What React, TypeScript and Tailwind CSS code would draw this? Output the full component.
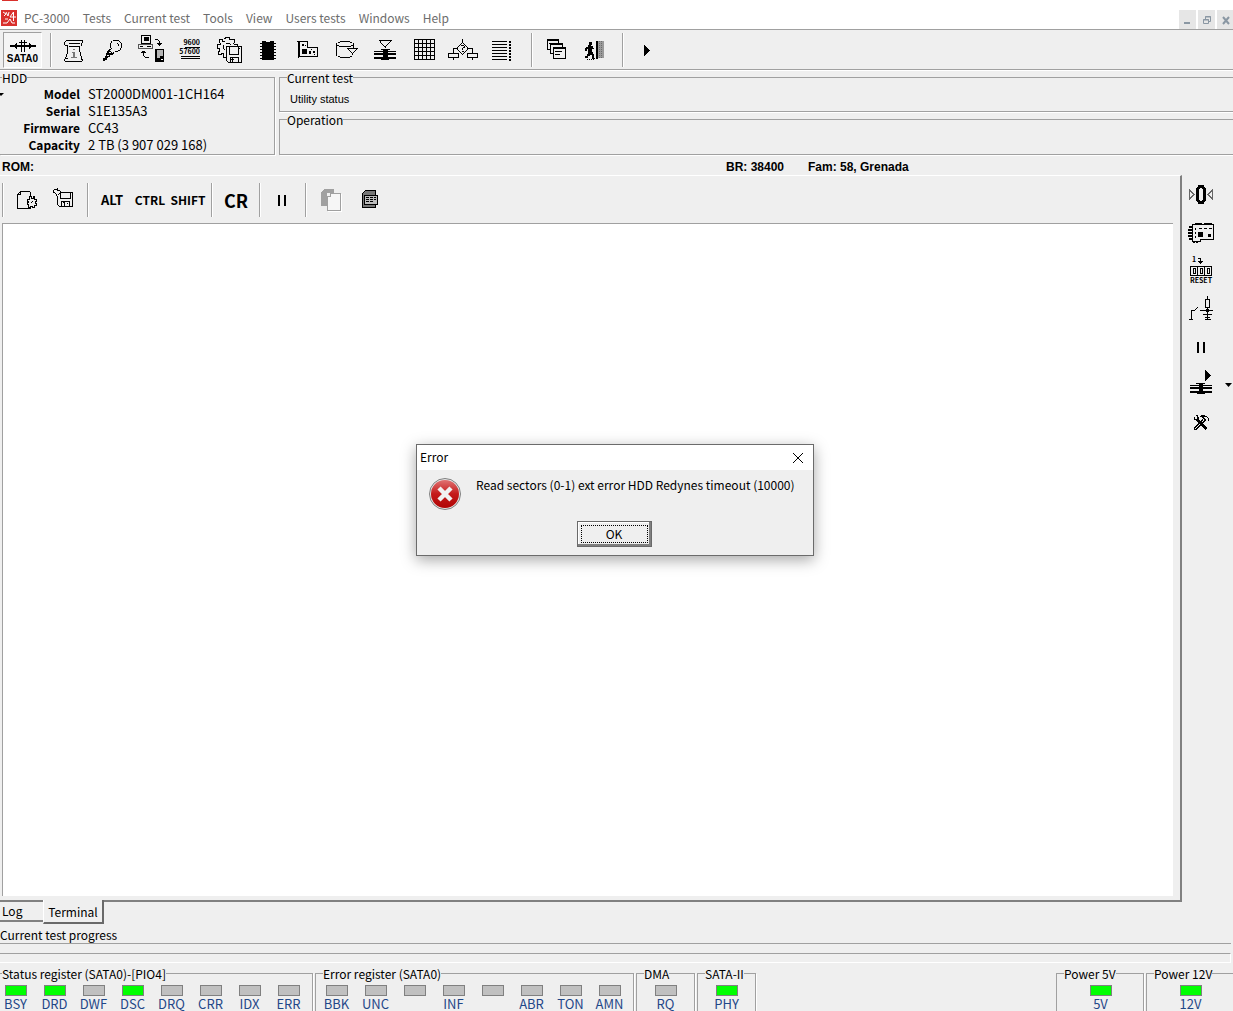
import type { ReactNode } from "react";

const menuItems = [
  "PC-3000",
  "Tests",
  "Current test",
  "Tools",
  "View",
  "Users tests",
  "Windows",
  "Help",
];

const driveInfo = [
  { label: "Model", value: "ST2000DM001-1CH164" },
  { label: "Serial", value: "S1E135A3" },
  { label: "Firmware", value: "CC43" },
  { label: "Capacity", value: "2 TB (3 907 029 168)" },
];

interface Led {
  label: string;
  on?: boolean;
}

const statusLeds: Led[] = [
  { label: "BSY", on: true },
  { label: "DRD", on: true },
  { label: "DWF" },
  { label: "DSC", on: true },
  { label: "DRQ" },
  { label: "CRR" },
  { label: "IDX" },
  { label: "ERR" },
];

const errorLeds: Led[] = [
  { label: "BBK" },
  { label: "UNC" },
  { label: "" },
  { label: "INF" },
  { label: "" },
  { label: "ABR" },
  { label: "TON" },
  { label: "AMN" },
];

function Icon({ children }: { children: ReactNode }) {
  return (
    <svg
      width="32"
      height="32"
      viewBox="0 0 32 32"
      fill="none"
      stroke="#000"
      shapeRendering="crispEdges"
      className="shrink-0"
      aria-hidden="true"
    >
      {children}
    </svg>
  );
}

function SataIcon() {
  return (
    <svg
      width="26"
      height="12"
      viewBox="0 0 26 12"
      stroke="#000"
      fill="none"
      shapeRendering="crispEdges"
      aria-hidden="true"
    >
      <path d="M0 6H26" strokeWidth="2" />
      <path d="M5.5 4V8M6.5 3V9M19.5 3V9M20.5 4V8" />
      <path d="M11.5 0V12M14.5 0V12M9 2.5H17" />
    </svg>
  );
}

function ScriptIcon() {
  return (
    <Icon>
      <path d="M9 6.5H26M8.5 7V8M7.5 8V11M8 11.5H11M25.5 7V9M24.5 9V12M12 9.5H23M12 12.5H22M10.5 12V20M9.5 20V23M8.5 23V25M7.5 25V27M8 27.5H25M22.5 12V18M23.5 18V22M24.5 22V26M25.5 25V27M9 24.5H11" />
      <path d="M16 15.5H18M15 18.5H18M14 23.5H20" stroke="#777" />
      <path d="M17 18V23" strokeWidth="2" stroke="#777" />
    </Icon>
  );
}

function LampIcon() {
  return (
    <Icon>
      <path d="M17 6.5H23M15.5 7V9M14.5 9V14M23.5 7V8M24.5 8V9M25.5 9V14M24.5 14V16M22 16.5H24M19 17.5H22M17.5 18V20M15.5 14V15M13 15.5H15M21.5 9V10M22.5 10V12" />
      <path d="M12 16H14V17H15V18H16V19H17V21H14V23H12V24H11V26H9V27H7V24H9V22H10V19H11V17H12Z" fill="#000" stroke="none" />
      <path d="M13 18.5H15M11 21.5H13" stroke="#eee" />
    </Icon>
  );
}

function TransferIcon() {
  return (
    <Icon>
      <path d="M6.5 1.5H15.5V9.5H6.5Z" />
      <path d="M9 3H14V7H9Z" fill="#000" stroke="none" />
      <path d="M3.5 10.5H17.5V14.5H3.5Z" stroke="#555" />
      <path d="M5 12.5H8M12 12.5H16" />
      <path d="M20 5.5H23M23.5 6V7M24.5 7V12M22 9.5H27M23 10.5H26M8.5 17V22M9.5 22V23M10 23.5H14M6 18.5H11M7 17.5H10" />
      <path d="M20 15H29V28H20Z" fill="#000" stroke="none" />
      <path d="M22 16H28V22H25V24H22Z" fill="#b5b5b5" stroke="none" />
      <path d="M26 25H28V26H26Z" fill="#fff" stroke="none" />
    </Icon>
  );
}

function BaudIcon() {
  return (
    <Icon>
      <g
        fill="#000"
        stroke="none"
        fontFamily="Noto Sans CJK KR, sans-serif"
        fontWeight="700"
        fontSize="7"
        textAnchor="end"
      >
        <text x="26" y="11">9600</text>
        <text x="26" y="20">57600</text>
      </g>
      <path d="M11 13.5H26M7 22.5H26M7 24.5H26" />
    </Icon>
  );
}

function GearDiskIcon() {
  return (
    <Icon>
      <path d="M11 4.5H12M12.5 5V3.5H16.5V5.5H18M18.5 6V5.5H21.5V8.5M20.5 9V10M21 10.5H24.5V12M12 7.5H9.5V5.5H6.5V8.5M7.5 9V10.5H4.5V14.5H6.5V17.5M5.5 17V20.5H8.5V19.5H10.5V23.5H13M12.5 9.5H16.5M10.5 11V14.5M11.5 15V16M17.5 10V11" />
      <path d="M13.5 12.5H28.5V28.5H15.5L13.5 26.5Z" fill="#efefef" />
      <path d="M16.5 13V20.5H25.5V13M17.5 28V23.5H25.5V28M18 25.5H21M19.5 24V28M26.5 14V15" />
    </Icon>
  );
}

function ChipIcon() {
  return (
    <Icon>
      <path d="M10 7H14V8H18V7H22V26H10Z" fill="#000" stroke="none" />
      <path d="M8 9.5H24M8 12.5H24M8 15.5H24M8 18.5H24M8 21.5H24M8 24.5H24" />
    </Icon>
  );
}

function BoardIcon() {
  return (
    <Icon>
      <path d="M7.5 7V24M6 7.5H16.5V14M8.5 8V23M8 22.5H26.5V13.5H17M26 14V22" />
      <path d="M11 15H16V20H11ZM11 10H13V12H11ZM18 17H20V20H18ZM22 17H24V19H22Z" fill="#000" stroke="none" />
      <path d="M14 11.5H15M20 15.5H21M23 20.5H24" />
    </Icon>
  );
}

function CylinderIcon() {
  return (
    <Icon>
      <path d="M10 7.5H20M8 8.5H10M20 8.5H22M6.5 9V22M23.5 9V14M7 11.5H9M9 12.5H21M21 11.5H23M8 22.5H10M10 23.5H20M20 22.5H22" />
      <path d="M17 14.5H28M18.5 15V16M19.5 16V17M20.5 17V18M21.5 18V19M22.5 19V21M23.5 18V19M24.5 17V18M25.5 16V17M26.5 15V16" />
      <path d="M19 15H26L22.5 18.5Z" fill="#efefef" stroke="none" />
    </Icon>
  );
}

function HeadsIcon() {
  return (
    <Icon>
      <path d="M10 6.5H23M11.5 7V9M12.5 9V10M13.5 10V11M14.5 11V12M15.5 12V13M16.5 12V14M17.5 11V12M18.5 10V11M19.5 9V10M20.5 8V9M21.5 7V8" />
      <path d="M12 15.5H21M5 17.5H27M12 25.5H20" />
      <path d="M5 20H27M5 24H27" strokeWidth="2" />
      <path d="M14 16H19V25H14Z" fill="#000" stroke="none" />
    </Icon>
  );
}

function GridIcon() {
  return (
    <Icon>
      <path d="M6.5 5.5H26.5V25.5H6.5ZM10.5 5V26M14.5 5V26M18.5 5V26M22.5 5V26M6 9.5H27M6 13.5H27M6 17.5H27M6 21.5H27" />
    </Icon>
  );
}

function FlowIcon() {
  return (
    <Icon>
      <path d="M15.5 5V9M14.5 9V10M13.5 10V11M12.5 11V12M11.5 12V13M10.5 13V16M11.5 16V17M12.5 17V18M13.5 18V19M14.5 19V20M15.5 20V21M16.5 9V10M17.5 10V11M18.5 11V12M19.5 12V13M20.5 13V16M19.5 16V17M18.5 17V18M17.5 18V19M16.5 19V20" />
      <path d="M6 14.5H11M20 14.5H26M6.5 14V19M25.5 14V19M1.5 19.5H11.5V23.5H1.5ZM20.5 19.5H30.5V23.5H20.5ZM6.5 24V26M25.5 24V26" />
      <path d="M14 11.5H17M17.5 12V14M15.5 14V16M15 17.5H17M16 13.5H17" />
    </Icon>
  );
}

function ListIcon() {
  return (
    <Icon>
      <path d="M6 7.5H21M6 10.5H21M6 13.5H21M6 16.5H21M6 19.5H21M6 22.5H21M6 25.5H21" />
      <path d="M24 7V27" strokeWidth="2" strokeDasharray="2 1" />
    </Icon>
  );
}

function WindowsIcon() {
  return (
    <Icon>
      <path d="M6.5 5.5H17.5V15.5H6.5Z" fill="#efefef" />
      <path d="M6 6.5H18M8 9.5H9" />
      <path d="M9.5 9.5H21.5V19.5H9.5Z" fill="#efefef" />
      <path d="M9 10.5H22" />
      <path d="M12.5 13.5H24.5V24.5H12.5Z" fill="#efefef" />
      <path d="M12 14.5H25M14 17.5H21M14 20.5H19" />
    </Icon>
  );
}

function ExitIcon() {
  return (
    <Icon>
      <path d="M10 8H13V11H12V12H14V14H15V15H13V18H14V20H15V24H16V25H13V21H11V22H9V24H6V22H8V20H9V15H8V17H6V14H7V13H9V11H10Z" fill="#000" stroke="none" />
      <path d="M18 7V25" strokeWidth="2" />
      <path d="M19 7H25V24H19Z" fill="#9a9a9a" stroke="none" />
      <path d="M20.5 7V24M22.5 7V24" stroke="#6b6b6b" strokeDasharray="1 1" />
      <path d="M8 25.5H16" strokeDasharray="1 1" />
    </Icon>
  );
}

function PlayIcon() {
  return (
    <Icon>
      <path d="M14 11V22L20 16.5Z" fill="#000" stroke="none" />
    </Icon>
  );
}

function NewScriptIcon() {
  return (
    <Icon>
      <path d="M10.5 7.5H19.5M20.5 8V12M10.5 7V10.5H7.5V24.5H20.5V22M8.5 9V10M9.5 8V9" />
      <path d="M17.5 15.5H19.5V12.5H21.5V14.5H23.5V12.5H24.5V15.5H26.5V17.5H25.5V19.5H26.5V21.5H24.5V23.5H22.5V22.5H20.5V23.5H18.5V20.5H17.5V18.5H18.5V17.5H17.5Z" />
      <path d="M22 17.5H23M21 18.5H22" />
    </Icon>
  );
}

function SaveIcon() {
  return (
    <Icon>
      <path d="M5.5 5.5H9V7M9.5 4V6M10 6.5H12M12.5 7V9M11.5 9V10M10.5 10V11M5.5 6V9M6.5 8V9M7.5 9V10M8.5 10V12" />
      <path d="M13 8.5H24.5V22.5H11.5L9.5 20.5V12M12.5 9V14.5H22.5V9M13.5 22V17.5H21.5V22M15 18.5H17M16.5 18V22M19 19.5H20" />
    </Icon>
  );
}

function CopyIcon() {
  return (
    <Icon>
      <path d="M9 5H19V9H12V22H6V8H7V7H8V6H9Z" fill="#a0a0a0" stroke="none" />
      <path d="M15.5 9.5H25.5V26.5H12.5V12.5H15.5Z" fill="#f6f6f6" stroke="#a0a0a0" />
      <path d="M26.5 10V27.5H13" stroke="#fff" />
    </Icon>
  );
}

function NotesIcon() {
  return (
    <Icon>
      <path d="M11.5 6.5H21.5V23.5H8.5V9.5Z" fill="#777" />
      <path d="M10.5 11.5H23.5V20.5H10.5Z" fill="#bdbdbd" />
      <path d="M12 13.5H22M12 15.5H22M12 17.5H19" strokeDasharray="3 1" />
    </Icon>
  );
}

function PauseIcon() {
  return (
    <Icon>
      <path d="M13 11V22M19 11V22" strokeWidth="2" />
    </Icon>
  );
}

function ZeroIcon() {
  return (
    <Icon>
      <path d="M4.5 11V20L9 15.5ZM27.5 11V20L23 15.5Z" stroke="#666" />
      <path d="M14.5 7.5H17.5L19.5 10V21L17.5 23.5H14.5L12.5 21V10Z" strokeWidth="3" />
    </Icon>
  );
}

function ControllerIcon() {
  return (
    <Icon>
      <path d="M7.5 7.5H28.5V22.5H15.5V24.5H7.5Z" />
      <path d="M10 6H17V8H10ZM19 6H27V8H19ZM13 15H18V20H13ZM23 17H26V20H23Z" fill="#000" stroke="none" />
      <path d="M14 11.5H28" strokeDasharray="3 2" />
      <path d="M4 10H8M3 13H7M3 16H7M3 19H7M4 22H8M9 24V26M12 24V26" strokeWidth="2" />
      <path d="M10.5 11V23" strokeDasharray="2 2" />
    </Icon>
  );
}

function ResetIcon() {
  return (
    <Icon>
      <g
        fill="#000"
        stroke="none"
        fontFamily="Noto Sans CJK KR, sans-serif"
        fontWeight="700"
        fontSize="7"
      >
        <text x="7" y="7">1</text>
        <text x="16" y="28" textAnchor="middle">RESET</text>
      </g>
      <path d="M13 3.5H15.5V9M13 6.500H18M14 7.500H17M15 8.500H16M5.500 11.500H26.500V20.500H5.500ZM12.500 12V20M19.500 12V20" />
      <path d="M8.500 13.500H10.500V18.500H8.500ZM15.500 13.500H17.500V18.500H15.500ZM22.500 13.500H24.500V18.500H22.500Z" />
    </Icon>
  );
}

function SwitchIcon() {
  return (
    <Icon>
      <path d="M22.5 3V6M20.5 6.5H24.5V14.5H20.5ZM22.5 15V21M15 17.5H28M18 21.5H27M20 24.5H25M22.5 22V27M20 26.5H26M4 26.5H8M6.5 17V27M6 17.5H10M10.5 16V17M11.5 15V16M12.5 14V15" />
      <path d="M21 16H24V19H21Z" fill="#000" stroke="none" />
    </Icon>
  );
}

function SpinIcon() {
  return (
    <Icon>
      <path d="M20 1V12L26 6.5Z" fill="#000" stroke="none" />
      <path d="M11 14.5H20M5 16.5H27M12 24.5H20" />
      <path d="M5 19H27M5 23H27" strokeWidth="2" />
      <path d="M14 15H18V24H14Z" fill="#000" stroke="none" />
    </Icon>
  );
}

function ToolsIcon() {
  return (
    <Icon>
      <path d="M11 8.5H13M9.5 10V12M9 12.5H12.5V9M13 12.5L22 21.5M11.5 13L21 22.5M13.5 10V12" />
      <path d="M16 8.5H20M15 9.5H22M22.5 10V11M23.5 11V14M17.5 10L20.5 13L11 22.5H9.5V21L18 12.5" />
    </Icon>
  );
}

function ToolButton({ label, children }: { label: string; children: ReactNode }) {
  return (
    <button
      type="button"
      aria-label={label}
      className="flex h-9 w-[39px] shrink-0 items-center justify-center"
    >
      {children}
    </button>
  );
}

function KeyButton({ children, className = "" }: { children: ReactNode; className?: string }) {
  return (
    <button
      type="button"
      className={`flex h-9 w-[38px] shrink-0 items-center justify-center font-bold leading-5 ${className}`}
    >
      {children}
    </button>
  );
}

function Separator({ className = "mr-0.5 ml-1" }: { className?: string }) {
  return (
    <div className={`h-[34px] w-0.5 shrink-0 border-r border-white bg-[#a0a0a0] ${className}`} />
  );
}

function Group({
  title,
  className = "",
  children,
}: {
  title: string;
  className?: string;
  children?: ReactNode;
}) {
  return (
    <fieldset
      className={`min-w-0 border border-[#a0a0a0] shadow-[1px_1px_0_#fff] ${className}`}
    >
      <legend className="h-[15px] leading-[15px] whitespace-nowrap">{title}</legend>
      {children}
    </fieldset>
  );
}

function LedRow({ leds }: { leds: Led[] }) {
  return (
    <div className="flex">
      {leds.map((led, index) => (
        <div key={index} className="flex w-[39px] flex-col items-center">
          <span
            className={`h-[11px] w-[22px] border border-[#808080] ${led.on ? "bg-[#00ff00]" : "bg-[#c0c0c0]"}`}
          />
          <span className="h-[15px] text-[13px] leading-[15px] text-[#1f4788]">{led.label}</span>
        </div>
      ))}
    </div>
  );
}

function MenuBar() {
  return (
    <header className="flex h-[30px] shrink-0 items-end border-b border-[#a0a0a0] bg-white">
      <svg width="24" height="29" viewBox="0 0 24 29" aria-hidden="true" className="shrink-0">
        <path d="M2 0H18V1H2Z" fill="#d9302c" />
        <path d="M1 10H17V26H1Z" fill="#d9302c" />
        <path
          d="M3 12L6 14L4 16M6 12L8 16L9 12M13.5 12L10 17H16M13.5 12V21M3 23H7L10 19L12 23H15M5 19H8"
          stroke="#fff"
          fill="none"
        />
      </svg>
      <nav className="flex h-[21px] flex-1 items-start gap-[13px] text-[#6d6d6d]">
        {menuItems.map((item) => (
          <button key={item} type="button" className="h-5 leading-5 whitespace-nowrap">
            {item}
          </button>
        ))}
      </nav>
      <div className="flex gap-0.5 self-end text-[#8a97a3]">
        <button type="button" aria-label="Minimize" className="h-[19px] w-[17px] bg-[#e6e6e6]">
          <svg width="17" height="18" viewBox="0 0 17 18" stroke="currentColor">
            <path d="M5 12H11" strokeWidth="2" />
          </svg>
        </button>
        <button type="button" aria-label="Restore" className="h-[19px] w-[17px] bg-[#e6e6e6]">
          <svg width="17" height="18" viewBox="0 0 17 18" stroke="currentColor" fill="none">
            <path d="M7.5 8V5.5H12.5V10.5H11M5.5 8.5H10.5V12.5H5.5ZM7 6H13M5 9H11" />
          </svg>
        </button>
        <button type="button" aria-label="Close" className="h-[19px] w-4 bg-[#e6e6e6]">
          <svg width="16" height="18" viewBox="0 0 16 18" stroke="currentColor" strokeWidth="2">
            <path d="M6 6L12 13M12 6L6 13" />
          </svg>
        </button>
      </div>
    </header>
  );
}

function MainToolbar() {
  return (
    <div className="flex h-10 shrink-0 items-center border-b border-[#a0a0a0] pl-[3px] shadow-[0_1px_0_#fff]">
      <button
        type="button"
        className="flex h-9 w-[39px] shrink-0 flex-col items-center justify-end border border-white border-t-[#a0a0a0] border-l-[#a0a0a0] bg-[#f5f5f5] pb-0.5"
      >
        <SataIcon />
        <span className="font-['Liberation_Sans',sans-serif] text-[10px] leading-[13px] font-bold">
          SATA0
        </span>
      </button>
      <div className="w-1" />
      <Separator className="mr-px ml-1" />
      <ToolButton label="Drive passport"><ScriptIcon /></ToolButton>
      <ToolButton label="Test"><LampIcon /></ToolButton>
      <ToolButton label="Data transfer"><TransferIcon /></ToolButton>
      <ToolButton label="Baud rate"><BaudIcon /></ToolButton>
      <ToolButton label="Save settings"><GearDiskIcon /></ToolButton>
      <ToolButton label="ROM"><ChipIcon /></ToolButton>
      <ToolButton label="Board"><BoardIcon /></ToolButton>
      <ToolButton label="Service area"><CylinderIcon /></ToolButton>
      <ToolButton label="Heads"><HeadsIcon /></ToolButton>
      <ToolButton label="Sector map"><GridIcon /></ToolButton>
      <ToolButton label="Translator"><FlowIcon /></ToolButton>
      <ToolButton label="Defect list"><ListIcon /></ToolButton>
      <div className="w-[6px]" />
      <Separator className="mx-1" />
      <ToolButton label="Cascade"><WindowsIcon /></ToolButton>
      <KeyButton><ExitIcon /></KeyButton>
      <div className="w-1" />
      <Separator />
      <ToolButton label="Start"><PlayIcon /></ToolButton>
    </div>
  );
}

function DrivePanel() {
  return (
    <section className="flex shrink-0 gap-1 pb-1">
      <Group title="HDD" className="relative w-[275px] border-l-0 pl-0.5">
        <svg
          width="4"
          height="3"
          viewBox="0 0 4 3"
          aria-hidden="true"
          className="absolute top-2 left-0"
        >
          <path d="M0 0H4L1 3L0 2Z" />
        </svg>
        <dl className="grid grid-cols-[78px_1fr] gap-x-2 pb-px leading-[17px]">
          {driveInfo.map((row) => (
            <div key={row.label} className="contents">
              <dt className="text-right font-bold">{row.label}</dt>
              <dd className="text-[13px] leading-[17px]">{row.value}</dd>
            </div>
          ))}
        </dl>
      </Group>
      <div className="flex min-w-0 flex-1 flex-col">
        <Group title="Current test" className="h-[42px] border-r-0 pl-[7px]">
          <p className="pt-1.5 pl-[3px] font-['Liberation_Sans',sans-serif] text-[11px] leading-4">
            Utility status
          </p>
        </Group>
        <Group title="Operation" className="flex-1 border-r-0 pl-[7px]" />
      </div>
    </section>
  );
}

function TerminalToolbar() {
  return (
    <div className="flex h-[47px] shrink-0 items-center">
      <Separator className="mx-0.5" />
      <ToolButton label="New script"><NewScriptIcon /></ToolButton>
      <KeyButton><SaveIcon /></KeyButton>
      <Separator className="mx-1" />
      <KeyButton className="text-[13px]">ALT</KeyButton>
      <KeyButton className="text-xs">CTRL</KeyButton>
      <KeyButton className="text-xs">SHIFT</KeyButton>
      <Separator className="mx-1" />
      <KeyButton className="text-[18px]">CR</KeyButton>
      <Separator />
      <KeyButton><PauseIcon /></KeyButton>
      <Separator className="mx-1" />
      <ToolButton label="Copy"><CopyIcon /></ToolButton>
      <ToolButton label="Notes"><NotesIcon /></ToolButton>
    </div>
  );
}

function SideButton({ label, children }: { label: string; children: ReactNode }) {
  return (
    <button
      type="button"
      aria-label={label}
      className="flex h-[38px] w-[38px] shrink-0 items-center justify-center"
    >
      {children}
    </button>
  );
}

function SideToolbar() {
  return (
    <aside className="flex w-[51px] shrink-0 flex-col pt-px">
      <SideButton label="Recalibrate"><ZeroIcon /></SideButton>
      <SideButton label="Controller"><ControllerIcon /></SideButton>
      <SideButton label="Reset counter"><ResetIcon /></SideButton>
      <SideButton label="Power switch"><SwitchIcon /></SideButton>
      <SideButton label="Pause"><PauseIcon /></SideButton>
      <div className="flex items-center">
        <SideButton label="Spin up"><SpinIcon /></SideButton>
        <button type="button" aria-label="Spin up options" className="flex flex-1 justify-end">
          <svg width="9" height="5" viewBox="0 0 9 5" aria-hidden="true">
            <path d="M1 0H8L4.5 4Z" />
          </svg>
        </button>
      </div>
      <SideButton label="Tools"><ToolsIcon /></SideButton>
    </aside>
  );
}

function RegisterBar() {
  return (
    <footer className="flex h-[45px] shrink-0 items-stretch gap-0.5">
      <Group title="Status register (SATA0)-[PIO4]" className="w-[313px] border-b-0 border-l-0 pl-0.5">
        <div className="-ml-1.5 pt-1"><LedRow leds={statusLeds} /></div>
      </Group>
      <Group title="Error register (SATA0)" className="w-[319px] border-b-0 pl-[7px]">
        <div className="-ml-1.5 pt-1"><LedRow leds={errorLeds} /></div>
      </Group>
      <Group title="DMA" className="w-[59px] border-b-0 pl-[7px]">
        <div className="pt-1 pl-0.5"><LedRow leds={[{ label: "RQ" }]} /></div>
      </Group>
      <Group title="SATA-II" className="w-[59px] border-b-0 pl-[7px]">
        <div className="pt-1 pl-0.5"><LedRow leds={[{ label: "PHY", on: true }]} /></div>
      </Group>
      <div className="flex-1" />
      <Group title="Power 5V" className="w-[88px] border-b-0 pl-[7px]">
        <div className="flex justify-center pt-1 pr-1.5"><LedRow leds={[{ label: "5V", on: true }]} /></div>
      </Group>
      <Group title="Power 12V" className="w-[87px] border-r-0 border-b-0 pl-[7px]">
        <div className="flex justify-center pt-1 pr-1.5"><LedRow leds={[{ label: "12V", on: true }]} /></div>
      </Group>
    </footer>
  );
}

function ErrorDialog() {
  return (
    <div
      role="alertdialog"
      aria-labelledby="error-title"
      aria-describedby="error-text"
      className="absolute top-[444px] left-[416px] w-[398px] border border-[#6b6b6b] bg-[#efefef] shadow-[0_4px_14px_rgba(0,0,0,0.35)]"
    >
      <div className="flex h-[25px] items-center justify-between bg-white pr-[9px] pl-[3px]">
        <h2 id="error-title" className="h-[18px] leading-4">Error</h2>
        <button type="button" aria-label="Close">
          <svg width="12" height="12" viewBox="0 0 12 12" stroke="#000" aria-hidden="true">
            <path d="M1 1L11 11M11 1L1 11" />
          </svg>
        </button>
      </div>
      <div className="flex gap-[14px] pt-[7px] pl-3">
        <svg width="33" height="33" viewBox="0 0 33 33" className="shrink-0" aria-hidden="true">
          <defs>
            <linearGradient id="error-red" x1="0" y1="0" x2="0" y2="1">
              <stop offset="0" stopColor="#e07272" />
              <stop offset="0.5" stopColor="#c41a1a" />
              <stop offset="1" stopColor="#b00505" />
            </linearGradient>
          </defs>
          <circle cx="16" cy="17" r="15.5" fill="#e6e6e6" stroke="#808080" />
          <circle cx="16" cy="17" r="14" fill="url(#error-red)" />
          <path d="M10 11L22 23M22 11L10 23" stroke="#f1f1f1" strokeWidth="4.5" />
        </svg>
        <p id="error-text" className="leading-4 whitespace-nowrap">
          Read sectors (0-1) ext error HDD Redynes timeout (10000)
        </p>
      </div>
      <div className="flex justify-center pt-[11px] pr-0.5 pb-2">
        <button
          type="button"
          className="h-[26px] w-[75px] border border-[#696969] bg-[#efefef] p-[3px] shadow-[inset_-2px_-2px_0_#808080,inset_1px_1px_0_#fff]"
        >
          <span className="flex h-full items-center justify-center border border-dotted border-black leading-4">
            OK
          </span>
        </button>
      </div>
    </div>
  );
}

export default function App() {
  return (
    <div className="relative flex h-screen flex-col overflow-hidden bg-[#efefef] font-['Noto_Sans_CJK_KR',sans-serif] text-xs text-black">
      <MenuBar />
      <MainToolbar />
      <DrivePanel />

      <div className="flex h-4 shrink-0 items-center font-['Liberation_Sans',sans-serif] text-xs leading-4 font-bold">
        <span className="w-[726px] pl-0.5">ROM:</span>
        <span className="w-[82px]">BR: 38400</span>
        <span>Fam: 58, Grenada</span>
      </div>

      <main className="flex min-h-0 flex-1">
        <div className="flex min-w-0 flex-1 flex-col border-t border-r-2 border-b-2 border-t-white border-r-[#808080] border-b-[#808080]">
          <TerminalToolbar />
          <textarea
            aria-label="Terminal"
            readOnly
            className="mr-[7px] mb-1 ml-0.5 block min-h-0 flex-1 resize-none border-t border-l border-[#a0a0a0] bg-white outline-none"
          />
        </div>
        <SideToolbar />
      </main>

      <div className="flex h-[22px] shrink-0 items-start" role="tablist">
        <button
          type="button"
          role="tab"
          aria-selected="false"
          className="h-5 w-[43px] border-b-2 border-[#808080] pl-0.5 text-left leading-[18px]"
        >
          Log
        </button>
        <button
          type="button"
          role="tab"
          aria-selected="true"
          className="-mt-0.5 h-6 w-[61px] border-r-2 border-b-2 border-l border-[#696969] border-l-white bg-[#efefef] pt-0.5 leading-5"
        >
          Terminal
        </button>
      </div>

      <div className="shrink-0 pt-[3px] pb-[3px]">
        <p className="h-4 leading-4">Current test progress</p>
        <div className="mr-0.5 h-[10px] border-t border-[#a0a0a0] shadow-[0_1px_0_#fff]" />
        <div className="mr-0.5 h-[10px] border-t border-r border-b border-white border-t-[#a0a0a0]" />
      </div>

      <RegisterBar />
      <ErrorDialog />
    </div>
  );
}
